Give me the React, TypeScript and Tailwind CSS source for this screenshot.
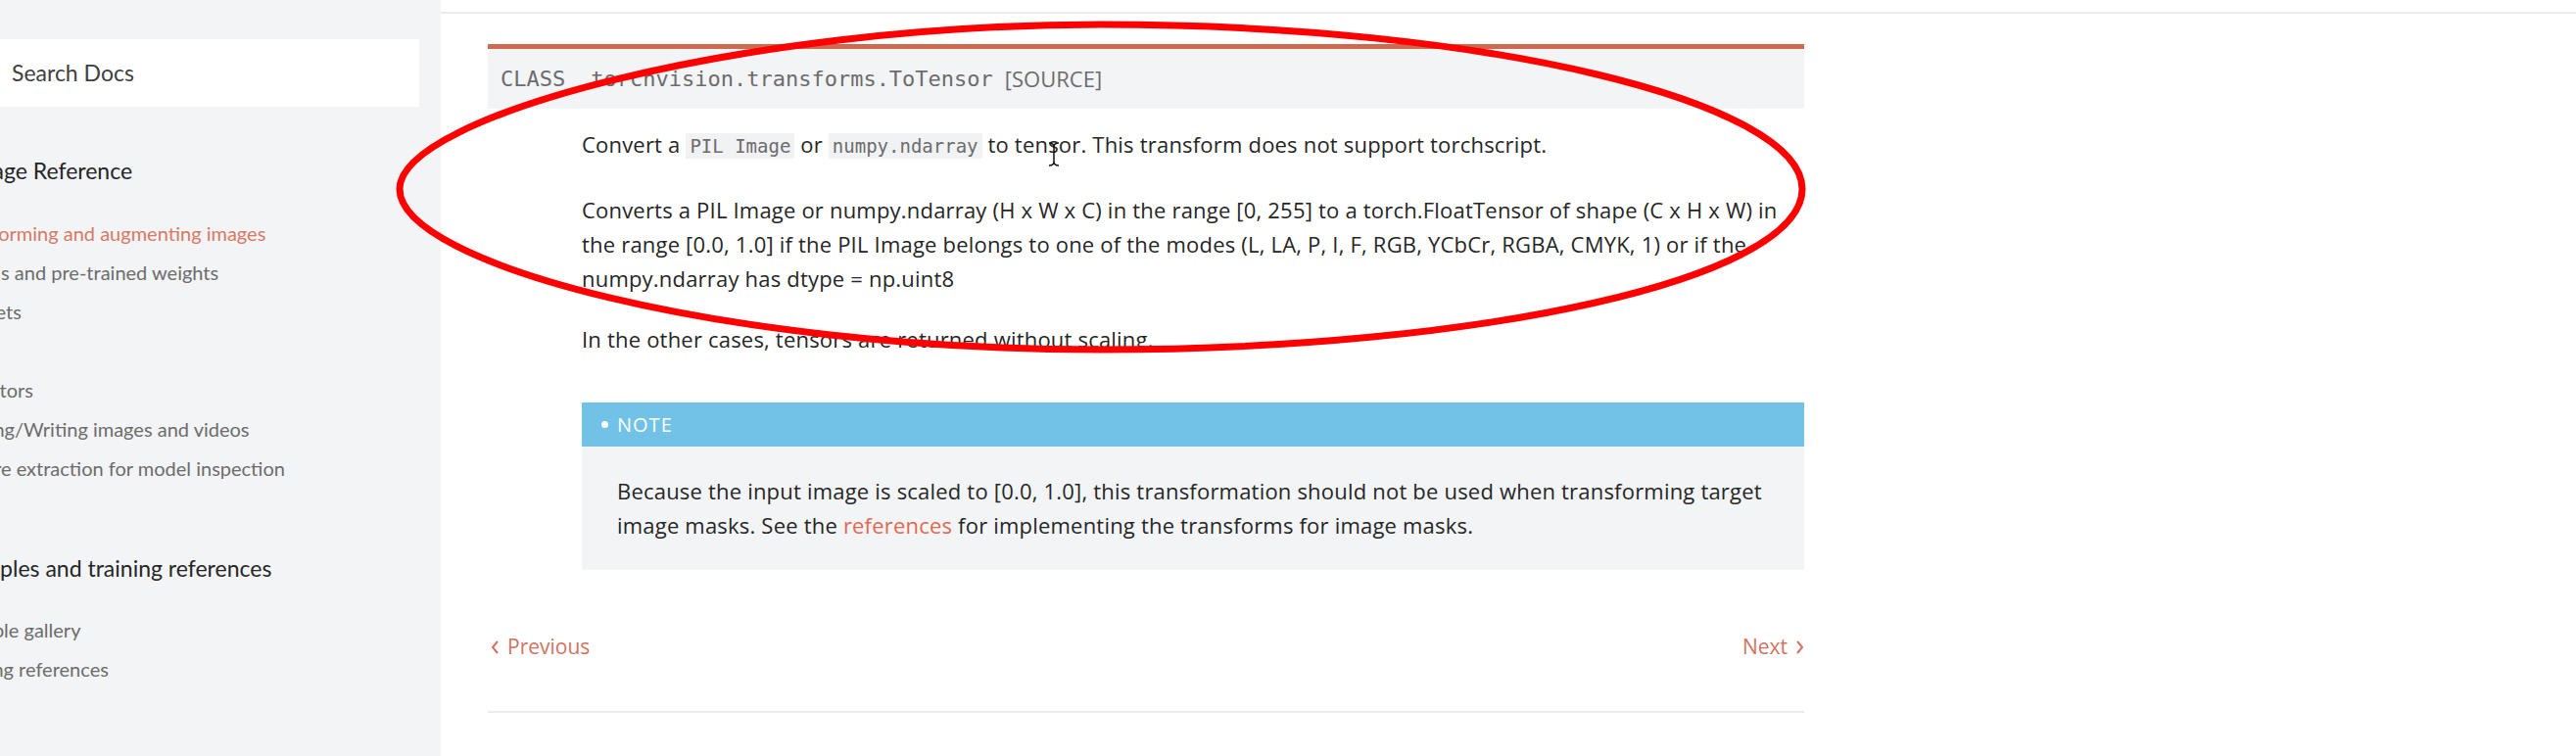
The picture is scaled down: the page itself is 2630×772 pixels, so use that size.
const sideItems = [
  { label: "Transforming and augmenting images", active: true },
  { label: "Models and pre-trained weights" },
  { label: "Datasets" },
  { label: "Utils" },
  { label: "Operators" },
  { label: "Reading/Writing images and videos" },
  { label: "Feature extraction for model inspection" },
];

function Sidebar() {
  return (
    <aside className="w-[450px] shrink-0 overflow-hidden bg-[#f3f4f6] font-['Lato',sans-serif]">
      <div className="mt-[40px] flex h-[69px] w-[428px] items-center bg-white pl-[12px] text-[23px] text-[#404040]">
        Search Docs
      </div>
      <div className="-ml-[55px] whitespace-nowrap">
        <p className="mt-[49px] text-[23px] leading-[32px] text-[#262626]">Package Reference</p>
        <ul className="mt-[28px] text-[20px] leading-[40px] text-[#6c6c6c]">
          {sideItems.map((it) => (
            <li key={it.label} className={it.active ? "text-[#d67a64]" : ""}>
              {it.label}
            </li>
          ))}
        </ul>
        <p className="mt-[66px] text-[23px] leading-[32px] text-[#262626]">Examples and training references</p>
        <ul className="mt-[27px] text-[20px] leading-[40px] text-[#6c6c6c]">
          <li>Example gallery</li>
          <li>Training references</li>
        </ul>
      </div>
    </aside>
  );
}

function Code({ children }: { children: string }) {
  return (
    <code className="bg-[#f1f2f4] px-[4px] py-[2px] font-['DejaVu_Sans_Mono',monospace] text-[19px] tracking-normal text-[#6c6c6c]">
      {children}
    </code>
  );
}

function Chevron({ dir }: { dir: "left" | "right" }) {
  return (
    <svg width="9" height="16" viewBox="0 0 9 16" fill="none" stroke="currentColor" strokeWidth="2">
      <path d={dir === "left" ? "M7 2 L2 8 L7 14" : "M2 2 L7 8 L2 14"} />
    </svg>
  );
}

function ClassDoc() {
  return (
    <div>
      <div className="flex h-[66px] items-center border-t-[5px] border-[#cd6b50] bg-[#f3f4f6] pl-[13px] text-[22px] text-[#6c6c6c]">
        <span className="font-['DejaVu_Sans_Mono',monospace]">CLASS</span>
        <span className="ml-[26px] font-['DejaVu_Sans_Mono',monospace]">torchvision.transforms.ToTensor</span>
        <span className="ml-[12px]">[SOURCE]</span>
      </div>
      <div className="pl-[96px] text-[22px] leading-[35px] tracking-[0.2px]">
        <p className="mt-[19px]">
          Convert a <Code>PIL Image</Code> or <Code>numpy.ndarray</Code> to tensor. This transform does not support
          torchscript.
        </p>
        <p className="mt-[30px]">
          Converts a PIL Image or numpy.ndarray (H x W x C) in the range [0, 255] to a torch.FloatTensor of shape (C x H
          x W) in the range [0.0, 1.0] if the PIL Image belongs to one of the modes (L, LA, P, I, F, RGB, YCbCr, RGBA,
          CMYK, 1) or if the numpy.ndarray has dtype = np.uint8
        </p>
        <p className="mt-[27px]">In the other cases, tensors are returned without scaling.</p>
        <div className="mt-[47px]">
          <div className="flex h-[45px] items-center bg-[#72c2e7] pl-[20px] text-[20px] tracking-[1px] text-white">
            <span className="mr-[9px] h-[7px] w-[7px] rounded-full bg-white" />
            NOTE
          </div>
          <div className="bg-[#f3f4f6] px-[36px] pb-[28px] pt-[28px]">
            Because the input image is scaled to [0.0, 1.0], this transformation should not be used when transforming
            target image masks. See the <a className="text-[#e0694f]">references</a> for implementing the transforms for
            image masks.
          </div>
        </div>
      </div>
    </div>
  );
}

function Pager() {
  return (
    <>
      <div className="mt-[64px] flex h-[30px] items-center justify-between text-[21px] text-[#d0735f]">
        <a className="flex items-center gap-[8px] pl-[3px]">
          <Chevron dir="left" />
          Previous
        </a>
        <a className="flex items-center gap-[8px]">
          Next
          <Chevron dir="right" />
        </a>
      </div>
      <div className="mt-[50px] h-[2px] bg-[#ececec]" />
    </>
  );
}

function Annotation() {
  return (
    <svg className="pointer-events-none absolute left-0 top-0" width="2630" height="772" viewBox="0 0 2630 772">
      <path
        d="M408 193 C408 118 760 25 1124 25 C1520 25 1840 105 1840 193 C1840 285 1510 357 1124 357 C740 357 408 270 408 193 Z"
        fill="none"
        stroke="#ff0000"
        strokeWidth="7"
      />
      <path
        d="M1071 146 Q1076 146 1076 150 V165 Q1076 169 1071 169 M1081 146 Q1076 146 1076 150 M1076 165 Q1076 169 1081 169"
        fill="none"
        stroke="#111"
        strokeWidth="1.5"
      />
    </svg>
  );
}

export default function App() {
  return (
    <div className="relative flex h-[772px] w-[2630px] overflow-hidden bg-white font-['Open_Sans',sans-serif] text-[#262626]">
      <Sidebar />
      <main className="flex-1">
        <div className="h-[14px] border-b-2 border-[#ebebeb]" />
        <div className="ml-[48px] w-[1344px] pt-[31px]">
          <ClassDoc />
          <Pager />
        </div>
      </main>
      <Annotation />
    </div>
  );
}
